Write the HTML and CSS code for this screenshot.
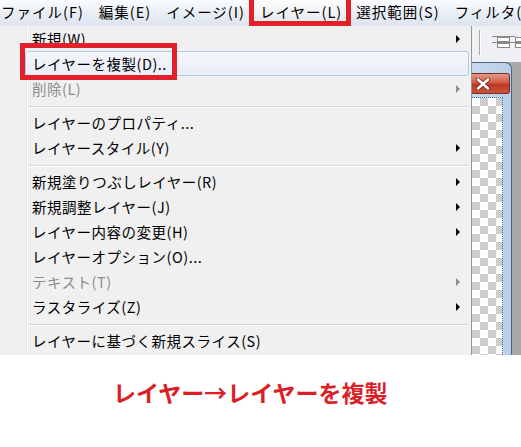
FILE: index.html
```html
<!DOCTYPE html>
<html lang="ja">
<head>
<meta charset="utf-8">
<link rel="stylesheet" href="styles.css">
</head>
<body>
<div class="screen">
  <div class="menubar">
    <span class="mb-item first">ファイル(F)</span>
    <span class="mb-item">編集(E)</span>
    <span class="mb-item">イメージ(I)</span>
    <span class="mb-item active">レイヤー(L)</span>
    <span class="mb-item">選択範囲(S)</span>
    <span class="mb-item">フィルタ(T)</span>
  </div>
  <div class="main">
    <div class="menu">
      <div class="mi"><span>新規(W)</span><i class="arrow"></i></div>
      <div class="mi hl"><span>レイヤーを複製(D)..</span></div>
      <div class="mi dis"><span>削除(L)</span><i class="arrow"></i></div>
      <div class="sep"></div>
      <div class="mi"><span>レイヤーのプロパティ...</span></div>
      <div class="mi"><span>レイヤースタイル(Y)</span><i class="arrow"></i></div>
      <div class="sep"></div>
      <div class="mi"><span>新規塗りつぶしレイヤー(R)</span><i class="arrow"></i></div>
      <div class="mi"><span>新規調整レイヤー(J)</span><i class="arrow"></i></div>
      <div class="mi"><span>レイヤー内容の変更(H)</span><i class="arrow"></i></div>
      <div class="mi"><span>レイヤーオプション(O)...</span></div>
      <div class="mi dis"><span>テキスト(T)</span><i class="arrow"></i></div>
      <div class="mi"><span>ラスタライズ(Z)</span><i class="arrow"></i></div>
      <div class="sep"></div>
      <div class="mi"><span>レイヤーに基づく新規スライス(S)</span></div>
    </div>
    <div class="side">
      <div class="toolbar">
        <div class="tb-sep"></div>
        <svg class="tb-icon" width="30" height="14" viewBox="0 0 30 14">
          <path d="M1 1.5H24M1 7.5H30" stroke="#8a8a8a" stroke-width="1" fill="none"/>
          <rect x="6.5" y="2.5" width="12" height="4" fill="#fff" stroke="#8a8a8a"/>
          <rect x="6.5" y="8.5" width="12" height="4" fill="#fff" stroke="#8a8a8a"/>
          <rect x="24.5" y="2.5" width="6" height="4" fill="#fff" stroke="#8a8a8a"/>
          <rect x="24.5" y="8.5" width="6" height="4" fill="#fff" stroke="#8a8a8a"/>
        </svg>
      </div>
      <div class="workspace">
        <div class="win">
          <div class="win-title">
            <div class="close">
              <svg width="14" height="12" viewBox="0 0 14 12">
                <path d="M2 1.5L12 10.5M12 1.5L2 10.5" stroke="#6b2a22" stroke-width="4" stroke-linecap="round"/>
                <path d="M2 1.5L12 10.5M12 1.5L2 10.5" stroke="#fff" stroke-width="2.4" stroke-linecap="round"/>
              </svg>
            </div>
          </div>
          <div class="canvas"></div>
        </div>
      </div>
    </div>
  </div>
  <div class="redbox rb1"></div>
  <div class="redbox rb2"></div>
</div>
<div class="caption">レイヤー→レイヤーを複製</div>
</body>
</html>
```
FILE: styles.css
```css
html, body {
  margin: 0;
  padding: 0;
  background: #fff;
}
body {
  width: 521px;
  height: 447px;
  overflow: hidden;
  font-family: "Noto Sans CJK JP", "Noto Sans", sans-serif;
}
.screen {
  position: relative;
  height: 355px;
  overflow: hidden;
}
.menubar {
  height: 26px;
  display: flex;
  align-items: center;
  background: linear-gradient(#fbfcfe, #e9eef5 50%, #dde4ee);
  font-size: 14.5px;
  letter-spacing: 1px;
  color: #000;
  white-space: nowrap;
}
.mb-item {
  padding: 0 7px 0 8px;
  line-height: 24px;
  height: 24px;
  box-sizing: border-box;
  margin-top: -2px;
}
.mb-item.first {
  margin-left: -7px;
}
.mb-item.active {
  background: linear-gradient(#fcfcfd, #e7eaee);
  border: 1px solid #8d97a3;
  border-top: none;
  border-radius: 0 0 2px 2px;
  padding: 0 5px 0 6px;
  line-height: 23px;
  margin: -2px 0 0 1px;
}
.main {
  display: flex;
  height: 329px;
}
.menu {
  width: 473px;
  border-right: 1px solid #979797;
  background: linear-gradient(to right, #f0f0f0 26px, #e2e3e3 26px, #e2e3e3 27px, #ffffff 27px, #ffffff 28px, #f0f0f0 28px);
  font-size: 14.5px;
  letter-spacing: 0.5px;
  color: #000;
  white-space: nowrap;
}
.mi {
  height: 25px;
  display: flex;
  align-items: center;
  padding: 0 11px 0 32px;
  box-sizing: border-box;
}
.mi.dis {
  color: #8d8d8d;
}
.mi.hl {
  margin: 0 2px 0 25px;
  padding-left: 6px;
  border: 1px solid #aecbee;
  border-radius: 3px;
  background: linear-gradient(#f4f7fb, #e8eef7);
}
.arrow {
  margin-left: auto;
  width: 0;
  height: 0;
  border-top: 4px solid transparent;
  border-bottom: 4px solid transparent;
  border-left: 4px solid #000;
}
.mi.dis .arrow {
  border-left-color: #8d8d8d;
}
.sep {
  height: 1px;
  background: #d7d7d7;
  border-bottom: 1px solid #fff;
  margin: 5px 2px 2px 28px;
}
.side {
  flex: 1;
  display: flex;
  flex-direction: column;
}
.toolbar {
  height: 36px;
  background: #eef0f3;
  display: flex;
  align-items: flex-start;
  padding-left: 7px;
}
.tb-sep {
  width: 1px;
  height: 25px;
  margin-top: 4px;
  background: #a9a9a9;
  border-right: 1px solid #fff;
}
.tb-icon {
  margin: 9px 0 0 10px;
  flex: none;
}
.workspace {
  flex: 1;
  background: #a9a9a9;
  display: flex;
}
.win {
  width: 39px;
  background: linear-gradient(to right, #c5d9ef, #b7cfe9);
  border: 1px solid #4f6480;
  border-left: none;
  border-bottom: none;
  border-radius: 0 7px 0 0;
  display: flex;
  flex-direction: column;
}
.win-title {
  height: 34px;
  padding-top: 10px;
  box-sizing: border-box;
}
.close {
  width: 38px;
  height: 21px;
  box-sizing: border-box;
  background: linear-gradient(#e49a8c, #d25b45 45%, #b93a24 55%, #c9533a);
  border: 1px solid #7d2b20;
  border-left: none;
  border-radius: 0 3px 3px 0;
  display: flex;
  align-items: center;
  padding-left: 4px;
}
.canvas {
  flex: 1;
  margin-right: 8px;
  border-top: 1px dotted #3b69b3;
  border-right: 1px dotted #3b69b3;
  background-color: #fff;
  background-image:
    linear-gradient(45deg, #cdcdcd 25%, transparent 25%, transparent 75%, #cdcdcd 75%),
    linear-gradient(45deg, #cdcdcd 25%, transparent 25%, transparent 75%, #cdcdcd 75%);
  background-size: 16px 16px;
  background-position: 0 0, 8px 8px;
}
.redbox {
  position: absolute;
  box-sizing: border-box;
  border: 5px solid #e3202a;
}
.rb1 {
  left: 249px;
  top: -6px;
  width: 102px;
  height: 32px;
}
.rb2 {
  left: 20px;
  top: 43px;
  width: 157px;
  height: 37px;
}
.caption {
  padding: 22px 0 0 113px;
  font-size: 23px;
  font-weight: bold;
  line-height: 30px;
  color: #dc1f27;
  white-space: nowrap;
}
```
